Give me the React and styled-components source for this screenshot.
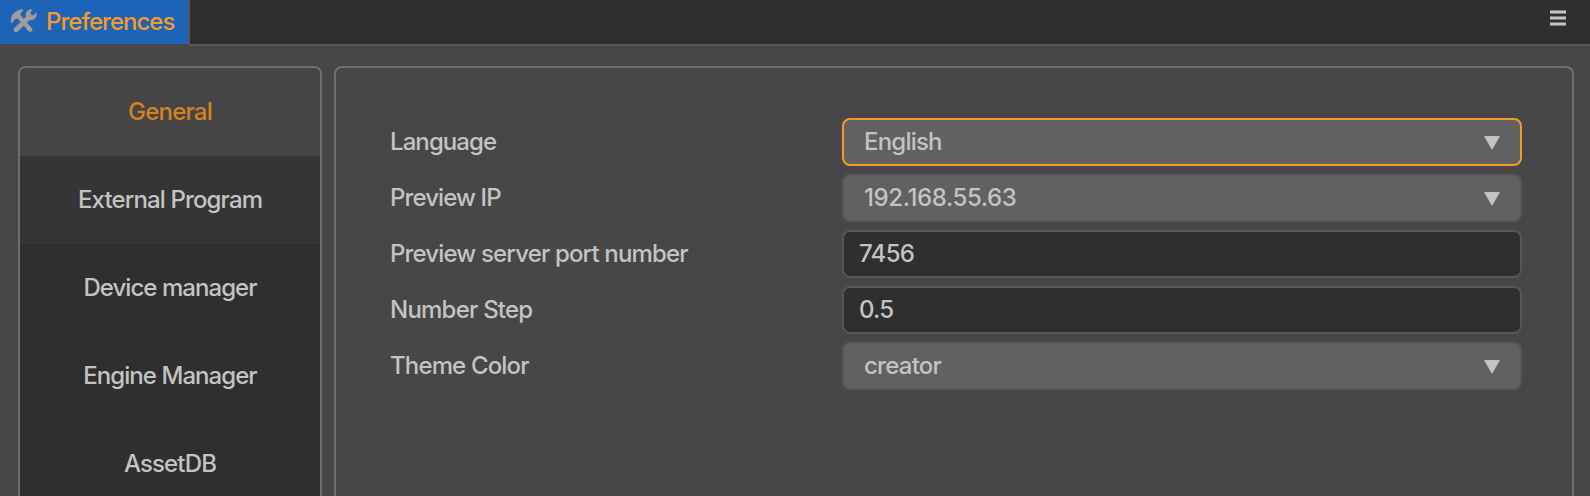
import React from "react";
import styled, { createGlobalStyle } from "styled-components";

const GlobalStyle = createGlobalStyle`
  * { box-sizing: border-box; }
  body {
    margin: 0;
    background: #474747;
    color: #c3c3c3;
    font-family: Inter, "Liberation Sans", sans-serif;
    font-size: 24px;
    font-weight: 450;
    line-height: 30px;
    overflow: hidden;
  }
`;

const Window = styled.div`
  display: flex;
  flex-direction: column;
  height: 496px;
  overflow: hidden;
`;

const TabBar = styled.header`
  display: flex;
  height: 46px;
`;

const Tab = styled.div`
  display: flex;
  align-items: center;
  width: 188px;
  height: 44px;
  padding-left: 10px;
  background: #1d63b8;
  color: #f49b27;
`;

const TabTitle = styled.span`
  margin-left: 9px;
  white-space: nowrap;
  letter-spacing: ${(p) => p.$spacing}px;
`;

const TabFill = styled.div`
  display: flex;
  flex: 1;
  justify-content: flex-end;
  padding: 10px 24px 0 0;
  background: #2f2f2f;
  border-left: 2px solid #565656;
  border-bottom: 2px solid #565656;
  border-bottom-left-radius: 2px;
`;

const MenuButton = styled.button`
  display: flex;
  flex-direction: column;
  gap: 2px;
  width: 16px;
  height: 16px;
  padding: 0;
  border: 0;
  background: none;
`;

const MenuLine = styled.span`
  height: 4px;
  background: #c3c3c3;
  border: solid #7c7c7c;
  border-width: 1px 0;
`;

const Body = styled.main`
  display: flex;
  flex: 1;
  gap: 12px;
  padding: 20px 16px 0 18px;
  min-height: 0;
`;

const Panel = styled.section`
  border: 2px solid #6f6f6f;
  border-bottom: 0;
  border-radius: 8px 8px 0 0;
  overflow: hidden;
`;

const Sidebar = styled(Panel)`
  width: 304px;
  background: #2f2f2f;
`;

const SidebarItem = styled.div`
  display: flex;
  align-items: center;
  justify-content: center;
  height: 88px;
  white-space: nowrap;
  letter-spacing: ${(p) => p.$spacing}px;
  background: ${(p) => (p.$state === "active" ? "#454545" : p.$state === "hover" ? "#353535" : "transparent")};
  color: ${(p) => (p.$state === "active" ? "#d4811f" : "inherit")};
`;

const Content = styled(Panel)`
  display: flex;
  flex: 1;
  flex-direction: column;
  gap: 8px;
  padding: 50px 50px 0 54px;
`;

const Row = styled.div`
  display: grid;
  grid-template-columns: 452px 1fr;
  align-items: center;
  height: 48px;
`;

const Label = styled.label`
  white-space: nowrap;
  letter-spacing: ${(p) => p.$spacing}px;
`;

const Field = styled.div`
  display: flex;
  align-items: center;
  justify-content: space-between;
  height: 48px;
  border: 2px solid ${(p) => (p.$focused ? "#f49b27" : "#565656")};
  border-radius: 8px;
  letter-spacing: ${(p) => p.$spacing}px;
`;

const Select = styled(Field)`
  padding: 0 20px;
  background: #616161;
`;

const Input = styled(Field)`
  padding: 0 15px;
  background: #2f2f2f;
`;

const Arrow = styled.svg`
  display: block;
  width: 16px;
  height: 14px;
  margin-top: 2px;
  fill: #c3c3c3;
`;

const ToolsSvg = styled.svg`
  display: block;
  width: 27px;
  height: 26px;
  margin-top: -3px;
  fill: #a09c97;
  stroke: #a09c97;
  stroke-width: 0.6;
  stroke-linejoin: round;
`;

function ToolsIcon() {
  return (
    <ToolsSvg viewBox="0 0 27 26">
      <path d="M1.2 14.5 C0.6 8 4 3 11.5 1.6 C13 1.3 13.8 2.2 12.6 2.9 C10.5 4 10 5.5 10.6 7.6 L22 20.8 C23 22.2 20.6 24.8 19 23.5 L8 10.6 C5.5 9.8 3.6 11.3 2.8 14.2 Z" />
      <path d="M16.2 8.8 C15.2 5 17.5 1.4 21.8 1.4 L20.2 5 L21.8 7.4 L24.8 7 L26.2 4.6 C27.3 9 24 12.6 19.6 11.8 L7.6 23.4 C5.4 25.2 2.6 22.6 4.2 20.4 Z" />
    </ToolsSvg>
  );
}

const items = [
  { text: "General", state: "active", spacing: -0.78 },
  { text: "External Program", state: "hover", spacing: -0.87 },
  { text: "Device manager", spacing: -0.95 },
  { text: "Engine Manager", spacing: -0.95 },
  { text: "AssetDB", spacing: -0.85 },
];

const rows = [
  { label: "Language", ls: -0.92, value: "English", vs: -0.8, select: true, focused: true },
  { label: "Preview IP", ls: -0.9, value: "192.168.55.63", vs: -0.4, select: true },
  { label: "Preview server port number", ls: -0.84, value: "7456", vs: -0.7 },
  { label: "Number Step", ls: -0.77, value: "0.5", vs: -0.8 },
  { label: "Theme Color", ls: -0.85, value: "creator", vs: -0.75, select: true },
];

export default function App() {
  return (
    <>
      <GlobalStyle />
      <Window>
        <TabBar>
          <Tab>
            <ToolsIcon />
            <TabTitle $spacing={-0.97}>Preferences</TabTitle>
          </Tab>
          <TabFill>
            <MenuButton aria-label="Menu">
              <MenuLine />
              <MenuLine />
              <MenuLine />
            </MenuButton>
          </TabFill>
        </TabBar>
        <Body>
          <Sidebar>
            {items.map((item) => (
              <SidebarItem key={item.text} $state={item.state} $spacing={item.spacing}>
                {item.text}
              </SidebarItem>
            ))}
          </Sidebar>
          <Content>
            {rows.map((row) => (
              <Row key={row.label}>
                <Label $spacing={row.ls}>{row.label}</Label>
                {row.select ? (
                  <Select $focused={row.focused} $spacing={row.vs}>
                    {row.value}
                    <Arrow viewBox="0 0 16 14">
                      <path d="M0 0H16L8 14Z" />
                    </Arrow>
                  </Select>
                ) : (
                  <Input $spacing={row.vs}>{row.value}</Input>
                )}
              </Row>
            ))}
          </Content>
        </Body>
      </Window>
    </>
  );
}
